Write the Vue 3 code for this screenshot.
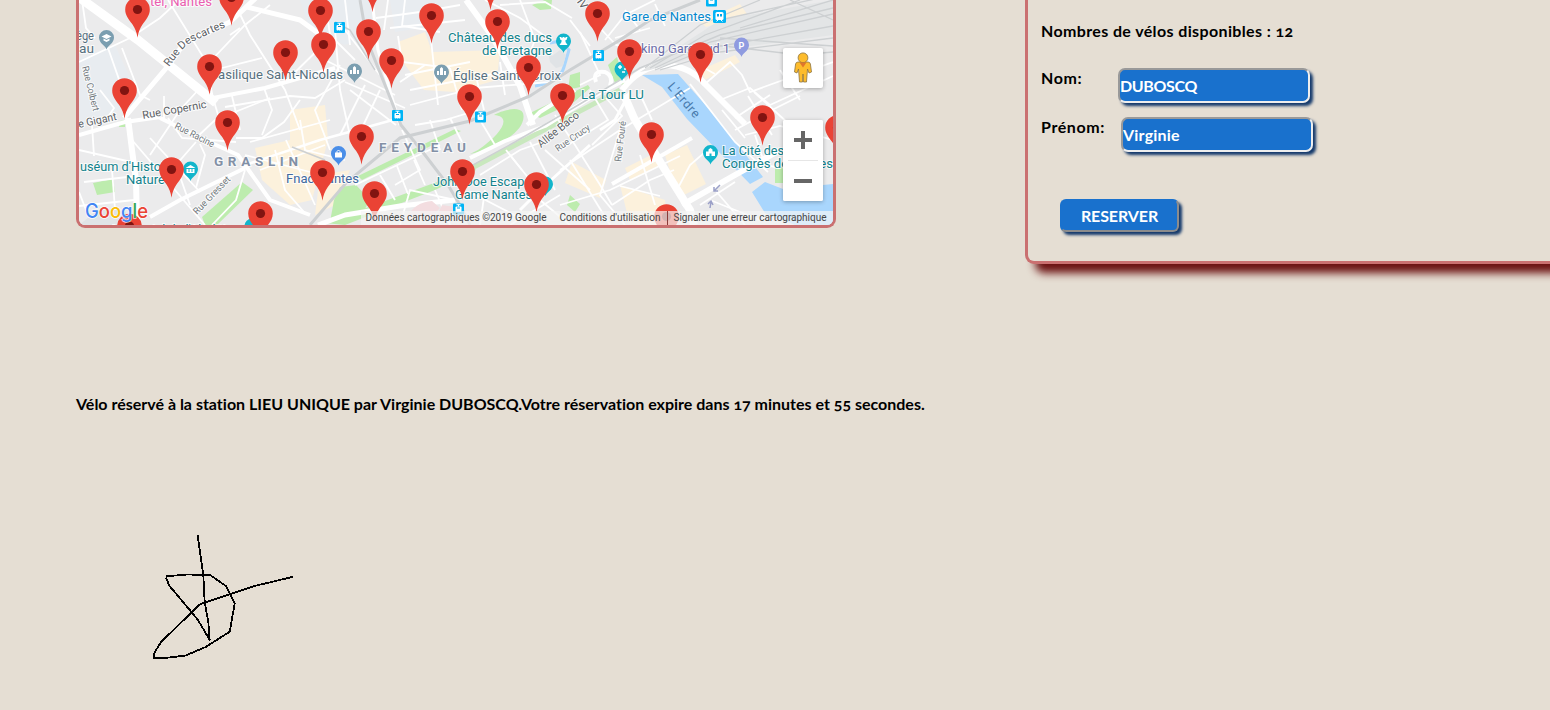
<script setup>
import { ref } from 'vue'

const lastName = ref('DUBOSCQ')
const firstName = ref('Virginie')
const bikes = 12

const pins = [
  [372.5, -16], [490.5, -18], [231.5, -2.5], [137.5, 9.5], [320.5, 10.5], [597.5, 13.5], [431.5, 15.5],
  [497.5, 21.5], [368.5, 31.5], [323.5, 44.5], [629.5, 51.5], [285.5, 52.5], [700.5, 54.5],
  [391.5, 60.5], [209.5, 66.5], [528.5, 67.5], [124.5, 90.5], [562.5, 95.5], [469.5, 96.5],
  [762.5, 117.5], [227.5, 122.5], [837.5, 127.5], [651.5, 134.5], [361.5, 136.5], [171.5, 169.5],
  [462.5, 171.5], [322.5, 172.5], [536.5, 184.5], [374.5, 193.5], [260.5, 213.5], [666.5, 216.5], [129.5, 226]
]

const trams = [[339.5, 27.5], [397.5, 115.5], [480.5, 117], [458.5, 209], [598.5, 55.5], [711.5, 1]]

const minorRoads = [
  'M79 62L130 38L160 18L175 4', 'M82 0L86 28L95 38', 'M108 48L122 88', 'M122 48L140 95L150 100', 'M168 0L205 60L213 98',
  'M205 67L245 25L270 5', 'M222 68L262 58', 'M238 10L250 35L285 90L300 130', 'M230 35L240 28', 'M285 82L330 38',
  'M225 107L290 96L315 98L345 80', 'M200 88L180 110L150 155', 'M213 98L222 128', 'M232 96L240 130', 'M264 88L272 110L262 135',
  'M164 96V118', 'M100 90L114 108L106 120', 'M92 125L94 156', 'M79 150L140 164', 'M79 192L92 225',
  'M79 206L134 200', 'M112 170L116 222', 'M136 176L84 182', 'M132 140L205 225', 'M150 138L200 192', 'M196 142L176 165L190 205',
  'M200 144L205 155L196 188', 'M168 118L182 138L236 142', 'M196 138L215 120L270 98', 'M245 170L236 200L212 225',
  'M236 138L262 138L284 122L300 100', 'M250 142L330 120', 'M275 150L285 190L304 212', 'M245 155L310 172', 'M260 170L325 145',
  'M286 140L315 205', 'M300 120L305 150L345 160', 'M335 30L340 90L352 145', 'M345 30L380 75', 'M325 60L395 95', 'M345 82L405 108',
  'M340 65L315 110L330 150', 'M365 85L340 135', 'M350 90L396 125', 'M380 90L362 128', 'M325 0L330 35L355 60', 'M345 0L350 45',
  'M388 0L384 30', 'M405 0L402 26L440 32', 'M390 28L465 20', 'M376 18L420 12L460 5', 'M398 36L402 62L450 68', 'M405 75L470 62',
  'M410 90L540 65', 'M410 105L475 88L550 82', 'M430 30L438 105', 'M450 68L462 110', 'M475 72L484 110', 'M500 62L505 95',
  'M425 65L400 82', 'M402 130L420 170L395 185', 'M415 125L445 120L478 110', 'M430 120L440 150', 'M450 118L462 142', 'M355 185L440 145',
  'M380 175L395 200', 'M397 166L408 194', 'M414 160L425 185', 'M480 120L495 145', 'M485 0L520 18L550 40',
  'M520 0L535 40L525 65', 'M500 5L545 2L572 18', 'M580 32L600 75L580 85', 'M605 40L625 15L655 0', 'M615 38L650 28', 'M600 28L616 45L640 50',
  'M570 20L590 46', 'M625 10L640 30', 'M655 4L665 26', 'M590 90L608 120L560 150', 'M606 98L622 116L592 145', 'M622 96L638 128', 'M640 94L652 120',
  'M555 115L575 145L602 188L612 205', 'M530 142L555 190', 'M510 155L530 180', 'M545 150L590 190', 'M480 175L520 150L548 140', 'M506 150L522 170',
  'M560 170L620 130L690 88', 'M560 205L610 190L680 156', 'M620 130L600 195L625 225', 'M640 155L655 205', 'M570 160L610 225',
  'M620 186L660 196', 'M612 205L650 180L674 170', 'M710 200L760 220', 'M715 190L745 225', 'M735 182L700 205',
  'M705 84L730 62L742 75L750 92L833 62', 'M720 100L750 88L770 105L833 76', 'M735 118L770 95', 'M735 130L772 110L800 96',
  'M722 110L745 138', 'M748 96L772 135', 'M754 92L790 125', 'M780 70L800 100', 'M745 135L780 126L833 140', 'M690 60L715 74', 'M755 135L765 165L780 168',
  'M540 200L570 225', 'M510 225L560 195', 'M400 225L410 190L455 200', 'M435 190L450 225', 'M470 192L520 218', 'M480 225L485 190',
  'M690 84L735 142L768 172', 'M678 188L690 165L704 153'
]

const mediumRoads = [
  ['M124 118L168 66L185 42L230 22L258 -4', 5], ['M247 7L300 20L322 36', 5], ['M213 98L265 88L335 68', 4],
  ['M128 118L132 150L136 180L137 225', 6], ['M79 135L125 122L160 117', 4], ['M150 217L180 200L245 168', 4],
  ['M160 118L205 140L238 155L250 172L270 200L310 215', 4], ['M245 165L320 140L400 118', 2.5],
  ['M318 225L345 215L400 206L455 200', 5], ['M372 0L378 50L400 125', 3], ['M527 125L540 112L575 90', 4],
  ['M622 90Q640 66 665 65Q690 66 705 84L745 124', 6], ['M470 158L505 141L545 126L590 98L625 80', 4],
  ['M612 184L692 138', 4], ['M682 205L735 175L780 150', 6], ['M630 92L615 120L600 130', 3],
  ['M596 82Q592 70 605 72Q614 76 610 86', 4], ['M520 210L540 190L590 145', 3]
]

// text, x, y, width, css class
const labels = [
  ['tel, Nantes', 150, 6, 62, 'pink'], ['ège', 76, 40, 18, 'slate'], ['au', 79, 53, 15, 'slate'],
  ['Basilique Saint-Nicolas', 210, 79, 133, 'slate'], ['Église Sainte-Croix', 453, 80, 108, 'slate'],
  ['Château des ducs', 448, 42, 104, 'teal'], ['de Bretagne', 482, 55, 70, 'teal'], ['Gare de Nantes', 622, 21, 89, 'blue'],
  ['king Gare Sud 1', 641, 53, 89, 'violet'], ['La Tour LU', 581, 99, 63, 'teal'], ['La Cité des', 722, 155, 62, 'teal'],
  ['Congrès de Nantes', 722, 168, 111, 'teal'], ['Fnac Nantes', 286, 183, 73, 'navy'], ["uséum d'Histoire", 80, 171, 95, 'teal'],
  ['Nature', 126, 184, 39, 'teal'], ['John Doe Escape', 433, 186, 98, 'teal'], ['Game Nantes', 455, 199, 77, 'teal'],
  ["Mémorial de l'Abolition", 112, 234, 128, 'teal']
]

// text, x, y, rotation, width
const streets = [
  ['Rue Copernic', 143, 119, -10, 65], ['Rue Colbert', 82, 67, 76, 46], ['e Gigant', 79, 128, -12, 39], ['Rue Racine', 174, 128, 27, 43],
  ['Rue Gresset', 197, 215, -46, 49], ['Allée Baco', 541, 148, -39, 50], ['Rue Crucy', 558, 152, -35, 40], ['Rue Fouré', 621, 162, -83, 41]
]
</script>

<template>
  <main class="page">
    <section class="top">
      <div class="map">
        <svg width="754" height="225" viewBox="79 0 754 225">
          <defs>
            <g id="pin">
              <path d="M0 28.3C-.8 23-2 19.300-5.300 14.500C-9 9.300-12.300 6-12.300 0A12.300 12.300 0 0 1 12.300 0C12.300 6 9 9.300 5.300 14.500C2 19.300 .8 23 0 28.300Z" fill="#ea4335" />
              <circle r="4.600" fill="#811411" />
            </g>
            <path id="drop" d="M0 12C-1 8-7.500 6-7.500 0A7.500 7.500 0 0 1 7.500 0C7.500 6 1 8 0 12Z" />
            <g id="tram">
              <rect x="-5.500" y="-5.500" width="11" height="11" rx="1" fill="#00b4f5" />
              <path d="M-2-4.300H2M0-4.300V-2.500" stroke="#fff" />
              <rect x="-3" y="-2.600" width="6" height="5.600" rx="1" fill="#fff" />
              <path d="M-1.500-1H1.500M-1.800 4.500L-1 3M1.800 4.500L1 3" stroke="#00a6e6" />
            </g>
            <path id="descartes" d="M169 67L182 50Q188 43 200 38L226 27" />
          </defs>

          <rect x="79" width="754" height="225" fill="#ebebec" />
          <g fill="#e8ecf0">
            <path d="M79 58L115 45L140 100L98 120L79 125ZM300 0H372V35L345 45L310 30ZM390 0H440V25L395 32Z" />
          </g>
          <g fill="#fcf1dc">
            <path d="M398 42L425 32L432 52L500 50L497 80L455 92L424 90L405 65Z" />
            <path d="M255 148L290 140L290 110L325 105L328 140L312 200L290 205L262 180Z" />
            <path d="M320 175L350 170L335 205L315 215Z" />
            <path d="M665 155L687 145L706 184L678 198ZM625 168L655 153L660 165L630 180ZM572 162L606 180L600 198L565 183ZM620 185L665 200L668 225H630Z" />
            <path d="M700 70L735 55L740 62L705 80ZM700 22L740 4L747 14L706 27Z" />
          </g>
          <g fill="#bdecae">
            <path d="M93 183L113 179L115 192L97 195ZM120 121L125 120V127L119 127Z" />
            <path d="M202 217L242 182L253 190L217 225H205Z" />
            <path d="M340 187L356 185L370 200L362 214L330 222L334 200Z" />
            <path d="M358 176L455 129L461 131L362 180ZM325 223L445 179L472 166L476 170L435 190L345 225Z" />
            <path d="M530 113L588 85L590 88L574 102L540 118ZM608 65L617 57L625 85L615 83Z" />
            <path d="M532 5L545 0H552L551 9L540 10ZM570 75L580 72L580 87L568 90Z" />
            <path d="M570 195L580 204L575 212L567 205ZM775 167L800 165V183L775 183Z" />
          </g>
          <path d="M470 154C498 148 528 130 523 113C519 105 500 111 494 115C512 116 503 133 478 150Z" fill="#bdecae" />
          <path d="M470 169L620 90" stroke="#c9e8be" stroke-width="5" />
          <path d="M642 75L678 74L717 118L763 177L750 184L687 119L662 87Z" fill="#a9d6fd" />
          <path d="M752 192L765 182L783 189L833 184V225H795L765 213Z" fill="#a9d6fd" />
          <path d="M535 86Q560 82 564 67L569 50L560 41L550 43" class="moat" />

          <g class="minor"><path v-for="d in minorRoads" :key="d" :d="d" /></g>
          <g class="major">
            <path v-for="[d, w] in mediumRoads" :key="d" :d="d" :stroke-width="w" />
            <path d="M80 -2L138 40L216 103" stroke-width="9" />
            <path d="M466 0L492 36L520 86L533 125" stroke-width="6" />
            <path d="M624 95L634 118L662 165L690 210L694 225" stroke-width="8" />
          </g>
          <g class="building">
            <path d="M548 52L552 56L560 50L566 55L563 66L556 68L550 62Z" />
            <path d="M79 225L98 210L125 210L130 225Z" />
          </g>
          <path d="M406 218Q415 202 432 201L440 208L430 218ZM442 205L455 207L448 216L436 218Z" fill="#f3dde0" />

          <g class="rail-area"><path d="M640 72L720 20L833 0V35L720 50L650 70Z" /></g>
          <g class="rail">
            <path d="M360 0L367 40L385 85L401 125L425 155L448 185L460 205L470 225" stroke-width="3" />
            <path d="M310 225L346 183L400 138L470 121L530 96L570 70L620 40L650 20L700 0" stroke-width="3" />
            <path d="M440 183L515 142L580 104L640 68L720 35L833 8" stroke-width="1.500" />
            <path d="M645 68L700 25L760 0M650 68L705 35L800 0M655 68L710 42L833 14M655 70L710 48L833 26M660 70L720 52L833 38M720 20L833 -5M740 28L833 0M790 0L833 20M715 45L800 55L833 52M720 38L833 46" stroke-width="1.300" />
          </g>
          <path d="M335 22L350 30L375 70M292 147L325 160" class="rail" stroke-width="1.500" />

          <g v-for="l in labels" :key="l[0]">
            <text :x="l[1]" :y="l[2]" :textLength="l[3]" lengthAdjust="spacingAndGlyphs" :class="['place', l[4]]">{{ l[0] }}</text>
          </g>
          <text v-for="s in streets" :key="s[0]" class="street" :class="{ small: s[4] < 50 && s[0] !== 'e Gigant' }" :textLength="s[4]" lengthAdjust="spacingAndGlyphs" :transform="`translate(${s[1]} ${s[2]}) rotate(${s[3]})`">{{ s[0] }}</text>
          <text class="street"><textPath href="#descartes">Rue Descartes</textPath></text>
          <text class="street" transform="translate(560 -22) rotate(55)">Henri IV</text>
          <text class="river" transform="translate(667 87) rotate(49)" textLength="42">L'Erdre</text>
          <text class="district" x="214" y="166" textLength="84">GRASLIN</text>
          <text class="district" x="379" y="152" textLength="87">FEYDEAU</text>

          <use v-for="t in trams" :key="t[0]" href="#tram" :transform="`translate(${t[0]} ${t[1]})`" />
          <g transform="translate(719.500 16.500)">
            <rect x="-6.500" y="-6.500" width="13" height="13" rx="1.500" fill="#00b4f5" />
            <rect x="-4" y="-4.500" width="8" height="8" rx="1.500" fill="#fff" />
            <path d="M-2.500-2.500H-.5V0H-2.500ZM.5-2.500H2.500V0H.5Z" fill="#00a6e6" />
            <path d="M-3 5L-1.500 3.500M3 5L1.500 3.500" stroke="#fff" />
          </g>

          <g transform="translate(106.500 37.500)"><use href="#drop" fill="#7b9eb0" /><path d="M-5-1L0-3.500L5-1L0 1.500ZM-3 1V3L0 4.500L3 3V1L0 2.500Z" fill="#fff" /></g>
          <g v-for="c in [[354.500, 71], [441.500, 72]]" :key="c[0]" :transform="`translate(${c[0]} ${c[1]})`">
            <use href="#drop" fill="#7b9eb0" /><path d="M-4.500 3V-1H-2.500V3ZM-1.500 3V-3.500L0-5L1.500-3.500V3ZM2.500 3V-1H4.500V3Z" fill="#fff" />
          </g>
          <g transform="translate(190.500 169)"><use href="#drop" fill="#12b5cb" /><path d="M-5-1L0-4L5-1ZM-4 0H4V4H-4Z" fill="#fff" /><path d="M-1.500 0V3M1.500 0V3" stroke="#12b5cb" /></g>
          <g transform="translate(563.500 41)"><use href="#drop" fill="#12b5cb" /><path d="M-4-4H-2V-3H-1V-4H1V-3H2V-4H4L3-1H2V1L4 4H-4L-2 1V-1H-3Z" fill="#fff" /></g>
          <g transform="translate(710.500 152.500)"><use href="#drop" fill="#12b5cb" /><path d="M-4.500 3.500V-1H-2V-3L0-4.500L2-3V-1H4.500V3.500H1V1H-1V3.500Z" fill="#fff" /></g>
          <g transform="translate(622 69)"><use href="#drop" fill="#12b5cb" /><path d="M-4-2H0M-2-4V0M0 3H3M3-1V1" stroke="#fff" stroke-width="1.500" /></g>
          <g transform="translate(338.500 153.500)"><use href="#drop" fill="#4a8ee8" /><path d="M-3.500-1H3.500V4H-3.500Z" fill="#fff" /><path d="M-1.500 0V-2Q0-5 1.500-2V0" fill="none" stroke="#fff" /></g>
          <g transform="translate(741.500 45)"><use href="#drop" fill="#8f9be0" /><text class="parking" x="-3" y="3.500">P</text></g>
          <use href="#drop" fill="#12b5cb" transform="translate(545.500 184)" />
          <use href="#drop" fill="#12b5cb" transform="translate(252 226)" />
          <path d="M720 185L714 191M714 187V191H718M710 208L711 202M708 204L711 201L713 205" fill="none" stroke="#9ba0c8" stroke-width="1.500" />

          <use v-for="p in pins" :key="p[0]" href="#pin" :transform="`translate(${p[0]} ${p[1]})`" />

          <rect x="361" y="211" width="472" height="14" fill="#f5f5f5" fill-opacity=".7" />
          <g class="legal">
            <text x="365.500" y="221" textLength="181">Données cartographiques ©2019 Google</text>
            <text x="559.500" y="221" textLength="101">Conditions d'utilisation</text>
            <text x="673.500" y="221" textLength="153">Signaler une erreur cartographique</text>
          </g>
          <path d="M667.500 211V225" stroke="#8a3b38" />
          <text class="logo" x="85" y="217.500" textLength="63" lengthAdjust="spacingAndGlyphs"><tspan fill="#4285f4">G</tspan><tspan fill="#ea4335">o</tspan><tspan fill="#fbbc05">o</tspan><tspan fill="#4285f4">g</tspan><tspan fill="#34a853">l</tspan><tspan fill="#ea4335">e</tspan></text>
        </svg>
        <div class="controls">
          <button class="pegman" aria-label="Street View">
            <svg width="20" height="32" viewBox="0 0 20 32">
              <g fill="#fdbc2c" stroke="#8d7440" stroke-width=".8">
                <path d="M5 10H15Q17 10 17.400 12L18.500 20L16 21L14.500 17L13.500 30H10.500L10 22L9.500 30H6.500L5.500 17L4 21L1.500 20L2.600 12Q3 10 5 10Z" />
                <circle cx="10" cy="5.800" r="4.900" />
              </g>
              <path d="M6.500 10.500H13.500L10 15.500Z" fill="#e0762b" />
            </svg>
          </button>
          <div class="zoom">
            <button aria-label="Zoom avant"><svg width="18" height="18" viewBox="0 0 18 18"><path d="M0 9H18M9 0V18" stroke="#666" stroke-width="4" /></svg></button>
            <button aria-label="Zoom arrière"><svg width="18" height="18" viewBox="0 0 18 18"><path d="M0 9H18" stroke="#666" stroke-width="4" /></svg></button>
          </div>
        </div>
      </div>

      <form class="panel" @submit.prevent>
        <p class="count">Nombres de vélos disponibles : {{ bikes }}</p>
        <div class="field"><label for="nom">Nom:</label><input id="nom" v-model="lastName" /></div>
        <div class="field second"><label for="prenom">Prénom:</label><input id="prenom" v-model="firstName" /></div>
        <button class="reserve">RESERVER</button>
      </form>
    </section>

    <p class="status">Vélo réservé à la station LIEU UNIQUE par Virginie DUBOSCQ.Votre réservation expire dans 17 minutes et 55 secondes.</p>

    <svg class="signature" width="160" height="140" viewBox="145 527 160 140">
      <path d="M197.700 535.700L203.300 575L204.700 602L208.300 622L209.700 640L198 620L191.700 612.300L169.300 585.700L166.300 578.500L166.700 576.300L186.700 574.500L210 575L226 586L234.700 603.300L229.700 631.700L205.700 647L185.700 655.500L165 658L154 658L153.700 654L161 642L200 604.300L253.300 586.300L292.300 577" />
    </svg>
  </main>
</template>

<style>
body { margin: 0; background: #e5ded3; }
</style>

<style scoped>
.page { height: 710px; overflow: hidden; background: #e5ded3; font: bold 16px Lato, "Noto Sans", sans-serif; color: #000; font-variant-numeric: oldstyle-nums; font-variant-ligatures: none; }
.top { display: flex; align-items: flex-start; padding-left: 76px; height: 395px; }
.map { position: relative; flex: none; box-sizing: border-box; width: 760px; height: 228px; border: 3px solid #ca7070; border-top: 0; border-radius: 0 0 9px 9px; overflow: hidden; }
.map > svg { display: block; }
.minor { fill: none; stroke: #fff; stroke-width: 1.8; }
.major { fill: none; stroke: #fff; stroke-linejoin: round; }
.moat { fill: none; stroke: #a9d6fd; stroke-width: 3; }
.building { fill: #e0e3e6; }
.rail-area { fill: #e3e5e6; }
.rail { fill: none; stroke: #cdd0d2; }
.place { font: 400 13.5px Roboto, sans-serif; paint-order: stroke; stroke: #fff; stroke-width: 2px; stroke-opacity: .8; }
.slate { fill: #56707e; }
.teal { fill: #12828c; }
.blue { fill: #0588cd; }
.violet { fill: #6a6ca8; }
.navy { fill: #41699f; }
.pink { fill: #ea5db0; }
.street { font: 400 11px Roboto, sans-serif; fill: #5b6065; paint-order: stroke; stroke: #fff; stroke-width: 2px; stroke-opacity: .8; }
.street.small { font-size: 9.5px; fill: #737a80; }
.river { font: 400 12.5px Roboto, sans-serif; fill: #4779ac; }
.district { font: 700 13.5px Roboto, sans-serif; fill: #8290a6; paint-order: stroke; stroke: #fff; stroke-width: 2px; stroke-opacity: .7; }
.parking { font: bold 9px Roboto, sans-serif; fill: #fff; }
.legal { font: 400 10px Roboto, sans-serif; fill: #444; }
.logo { font: 500 20px Inter, sans-serif; paint-order: stroke; stroke: #fff; stroke-width: 1.5px; stroke-opacity: .8; }
.controls { position: absolute; right: 10px; top: 48px; display: flex; flex-direction: column; gap: 32px; }
.controls button { display: flex; align-items: center; justify-content: center; width: 40px; height: 40px; padding: 0; border: 0; background: #fff; }
.pegman, .zoom { border-radius: 2px; box-shadow: 0 1px 4px rgba(0, 0, 0, .3); }
.zoom { background: #fff; overflow: hidden; }
.zoom button + button { position: relative; height: 41px; }
.zoom button + button::before { content: ""; position: absolute; top: 0; left: 5px; width: 30px; height: 1px; background: #e6e6e6; }
.panel { flex: none; box-sizing: border-box; width: 560px; height: 264px; margin-left: 189px; padding: 20px 13px 0; border: 3px solid #ca7070; border-top: 0; border-radius: 0 0 9px 9px; box-shadow: 10px 9px 8px #6b1111; background: #e5ded3; }
.count { margin: 0; height: 48px; line-height: 22px; letter-spacing: .37px; }
.field { display: flex; align-items: flex-start; height: 49px; line-height: 20px; letter-spacing: .6px; }
.field label { width: 77px; }
.second label { width: 80px; }
input { box-sizing: border-box; width: 192px; height: 35px; padding: 0 0 1px; border: 2px solid; border-color: #999 #eee #eee #999; border-radius: 7px; background: #1971cd; color: #fff; font: inherit; letter-spacing: -.35px; box-shadow: 3px 3px 3px #14396b; outline: 0; }
.second input { letter-spacing: .2px; }
.reserve { display: block; width: 119px; height: 33px; margin: 33px 0 0 19px; padding: 0; border: 2px solid; border-color: #1971cd #8c8c8c #8c8c8c #1971cd; border-radius: 6px; background: #1971cd; color: #fff; font: inherit; letter-spacing: -.1px; box-shadow: 3px 3px 3px #14396b; }
.status { margin: 0 0 0 76px; height: 132px; line-height: 18px; white-space: nowrap; }
.signature { display: block; margin-left: 145px; }
.signature path { fill: none; stroke: #000; stroke-width: 1.8; stroke-linejoin: round; stroke-linecap: round; shape-rendering: crispEdges; }
</style>
